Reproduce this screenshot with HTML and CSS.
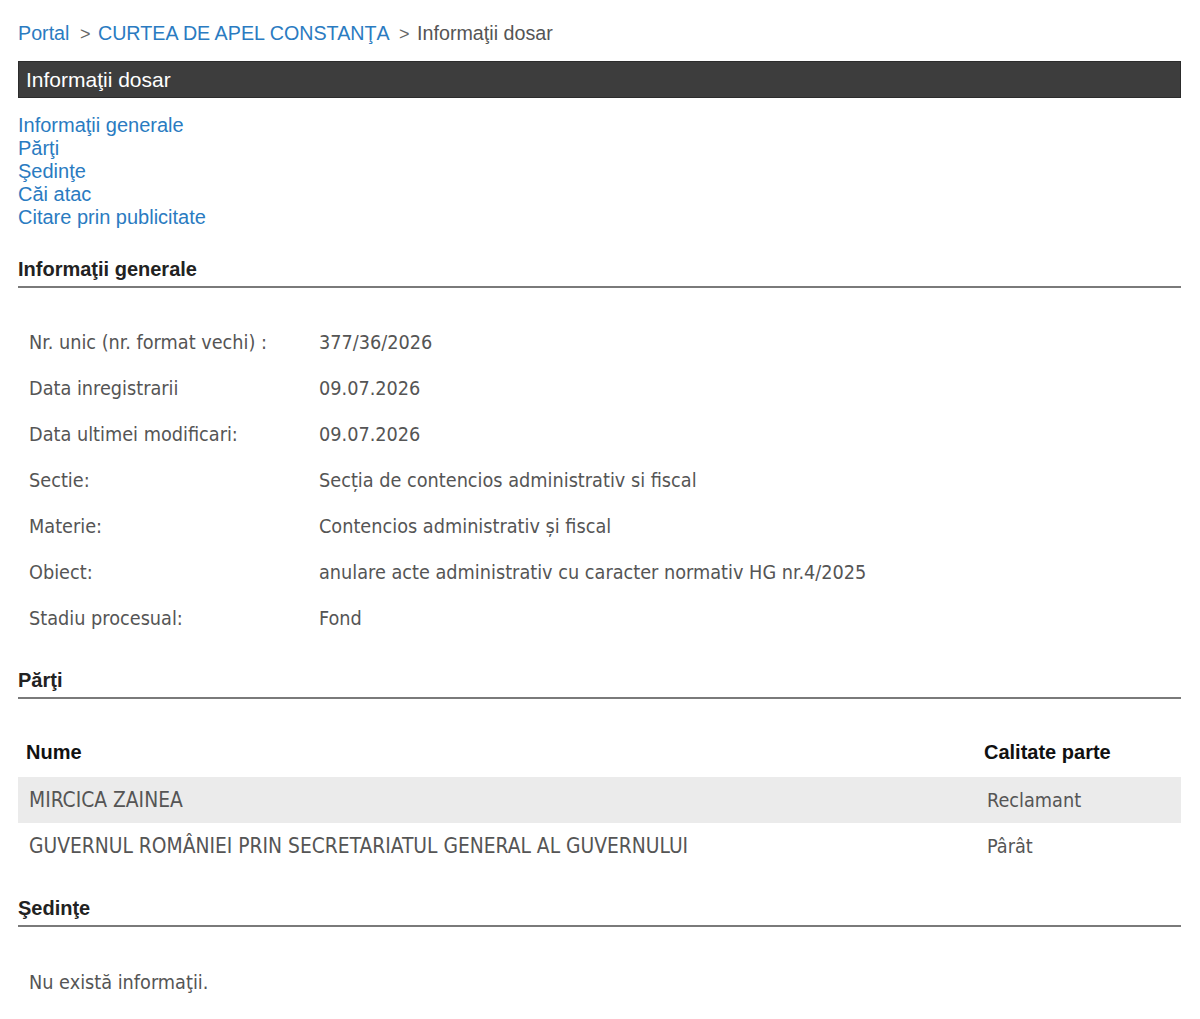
FILE: index.html
```html
<!DOCTYPE html>
<html lang="ro">
<head>
  <meta charset="UTF-8">
  <title>Informaţii dosar</title>
  <meta name="viewport" content="width=device-width, initial-scale=1.0">
  <link rel="stylesheet" href="styles.css">
</head>
<body>
  <div class="page">
    <div class="breadcrumb">
      <a href="#">Portal</a>
      <span class="sep">&gt;</span>
      <a href="#">CURTEA DE APEL CONSTANŢA</a>
      <span class="sep">&gt;</span>
      <span class="current">Informaţii dosar</span>
    </div>

    <div class="title-bar">Informaţii dosar</div>

    <ul class="toc">
      <li><a href="#generale">Informaţii generale</a></li>
      <li><a href="#parti">Părţi</a></li>
      <li><a href="#sedinte">Şedinţe</a></li>
      <li><a href="#cai">Căi atac</a></li>
      <li><a href="#citare">Citare prin publicitate</a></li>
    </ul>

    <h3 class="section-title" id="generale">Informaţii generale</h3>
    <table class="info-table">
      <tr><td class="label">Nr. unic (nr. format vechi) :</td><td>377/36/2026</td></tr>
      <tr><td class="label">Data inregistrarii</td><td>09.07.2026</td></tr>
      <tr><td class="label">Data ultimei modificari:</td><td>09.07.2026</td></tr>
      <tr><td class="label">Sectie:</td><td>Secția de contencios administrativ si fiscal</td></tr>
      <tr><td class="label">Materie:</td><td>Contencios administrativ și fiscal</td></tr>
      <tr><td class="label">Obiect:</td><td>anulare acte administrativ cu caracter normativ HG nr.4/2025</td></tr>
      <tr><td class="label">Stadiu procesual:</td><td>Fond</td></tr>
    </table>

    <h3 class="section-title" id="parti">Părţi</h3>
    <table class="parti-table">
      <thead>
        <tr><th>Nume</th><th class="col-calitate">Calitate parte</th></tr>
      </thead>
      <tbody>
        <tr class="odd"><td class="col-nume">MIRCICA ZAINEA</td><td class="col-calitate">Reclamant</td></tr>
        <tr><td class="col-nume">GUVERNUL ROMÂNIEI PRIN SECRETARIATUL GENERAL AL GUVERNULUI</td><td class="col-calitate">Pârât</td></tr>
      </tbody>
    </table>

    <h3 class="section-title" id="sedinte">Şedinţe</h3>
    <p class="empty">Nu există informaţii.</p>
  </div>
</body>
</html>
```

FILE: styles.css
```css
* {
  box-sizing: border-box;
  margin: 0;
  padding: 0;
}

body {
  font-family: 'Liberation Sans', Arial, sans-serif;
  background: #fff;
  color: #333;
}

.page {
  padding: 20px 19px 30px 18px;
}

a {
  color: #2a7bc1;
  text-decoration: none;
}

.breadcrumb {
  font-size: 19.7px;
  line-height: 26px;
  color: #555;
}

.breadcrumb .sep {
  color: #666;
  font-size: 18px;
  margin: 0 2px 0 5px;
}

.title-bar {
  margin-top: 14px;
  background-color: #3d3d3d;
  color: #fff;
  font-size: 21px;
  height: 37px;
  line-height: 35px;
  padding-left: 7px;
  border: 1px solid #2c2c2c;
}

.toc {
  list-style: none;
  margin-top: 16px;
  font-size: 20px;
  line-height: 23px;
}

.section-title {
  font-size: 20px;
  font-weight: bold;
  color: #222;
  line-height: 24px;
  padding-bottom: 5px;
  border-bottom: 2px solid #7a7a7a;
}

#generale {
  margin-top: 28px;
}

#parti {
  margin-top: 27px;
}

#sedinte {
  margin-top: 27px;
}

.info-table,
.parti-table {
  width: 100%;
  border-collapse: collapse;
  font-family: 'DejaVu Sans Condensed', 'DejaVu Sans', sans-serif;
  font-size: 19.7px;
  color: #555;
}

.info-table {
  margin-top: 31px;
}

.info-table td {
  height: 46px;
  padding: 0 10px 0 11px;
  vertical-align: middle;
}

.info-table td.label {
  width: 290px;
}

.parti-table {
  margin-top: 28px;
}

.parti-table th {
  font-family: 'Liberation Sans', Arial, sans-serif;
  font-size: 20px;
  font-weight: bold;
  color: #111;
  text-align: left;
  height: 50px;
  padding: 0 8px;
}

.parti-table td {
  height: 46px;
  padding: 0 11px;
}

.parti-table td.col-nume {
  font-size: 20.8px;
}

.parti-table .col-calitate {
  width: 205px;
}

.parti-table tr.odd td {
  background-color: #ebebeb;
}

.empty {
  font-family: 'DejaVu Sans Condensed', 'DejaVu Sans', sans-serif;
  font-size: 19.7px;
  color: #555;
  margin-top: 44px;
  padding-left: 11px;
}
```
